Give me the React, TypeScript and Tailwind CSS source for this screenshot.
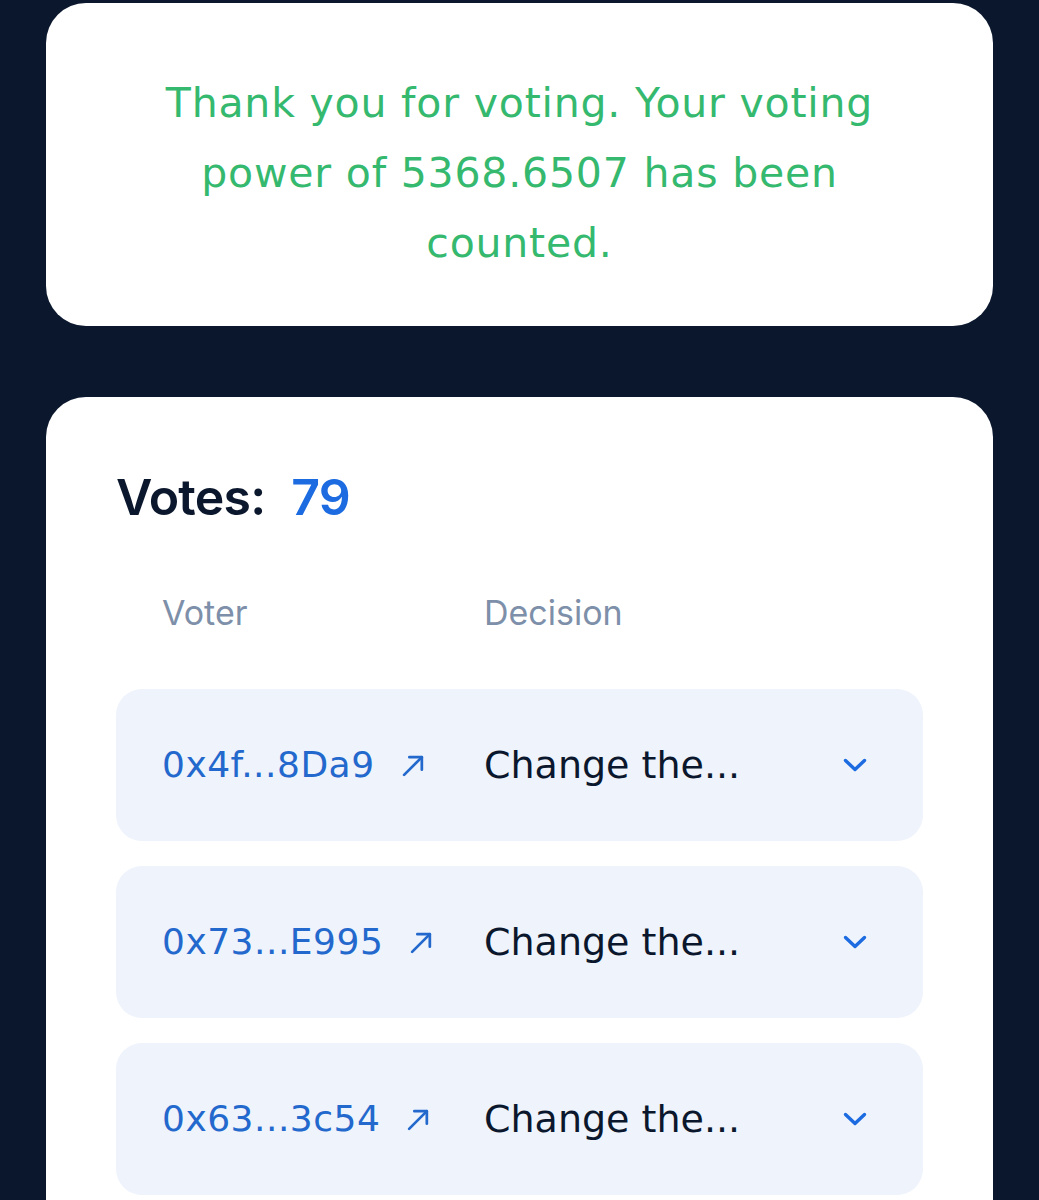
const votes = [
  { voter: "0x4f...8Da9", decision: "Change the..." },
  { voter: "0x73...E995", decision: "Change the..." },
  { voter: "0x63...3c54", decision: "Change the..." },
];

function ArrowIcon() {
  return (
    <svg width="25" height="25" viewBox="0 0 24 24" fill="none" stroke="currentColor" strokeWidth="2.6" strokeLinecap="round" strokeLinejoin="round">
      <path d="M3 21 20 4" />
      <path d="M8 4h12v12" />
    </svg>
  );
}

function ChevronIcon() {
  return (
    <svg width="24" height="14" viewBox="0 0 24 14" fill="none" stroke="currentColor" strokeWidth="3.4" strokeLinecap="round" strokeLinejoin="round">
      <path d="M2.5 2.5 12 11.5l9.5-9" />
    </svg>
  );
}

export default function App() {
  return (
    <div className="min-h-screen bg-[#0a172d] px-[46px] pt-[3px] font-['DejaVu_Sans',sans-serif]">
      <div className="h-[323px] rounded-[40px] bg-white flex flex-col items-center justify-center text-center text-[41px] leading-[70px] text-[#35b96f] pt-[16px] tracking-[0.8px]">
        <span>Thank you for voting. Your voting</span>
        <span>power of 5368.6507 has been</span>
        <span>counted.</span>
      </div>

      <div className="mt-[71px] rounded-t-[40px] bg-white px-[70px] pt-[70px] pb-10">
        <h2 className="flex items-center gap-[26px] text-[50px] leading-[60px] font-semibold text-[#0b172c] font-['Inter',sans-serif] tracking-[-0.8px]">
          <span>Votes:</span>
          <span className="text-[#1c6be0]">79</span>
        </h2>

        <div className="mt-[66px] flex pl-[46px] text-[34px] leading-[40px] text-[#7d8fa9] font-['Inter',sans-serif]">
          <span className="w-[322px]">Voter</span>
          <span>Decision</span>
        </div>

        <div className="mt-[56px] flex flex-col gap-[25px]">
          {votes.map((v) => (
            <div key={v.voter} className="h-[152px] rounded-[26px] bg-[#eff3fc] flex items-center pl-[46px] pr-[56px]">
              <div className="w-[322px] flex items-center gap-[26px] text-[36px] text-[#2368cc] tracking-[0.5px]">
                <span>{v.voter}</span>
                <ArrowIcon />
              </div>
              <span className="flex-1 text-[38px] text-[#0b172c]">{v.decision}</span>
              <span className="text-[#1c6be0]">
                <ChevronIcon />
              </span>
            </div>
          ))}
        </div>
      </div>
    </div>
  );
}
